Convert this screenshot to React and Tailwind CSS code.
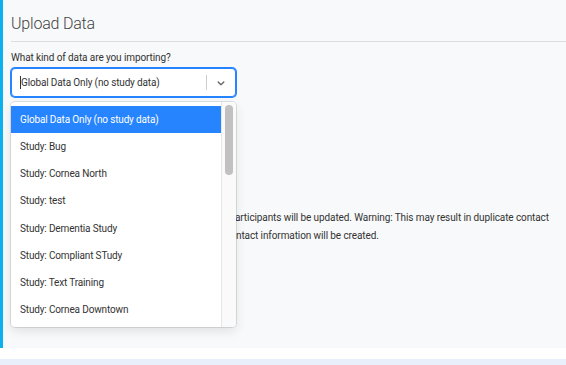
import React from "react";

const options = [
  "Global Data Only (no study data)",
  "Study: Bug",
  "Study: Cornea North",
  "Study: test",
  "Study: Dementia Study",
  "Study: Compliant STudy",
  "Study: Text Training",
  "Study: Cornea Downtown",
];

export default function App() {
  return (
    <div className="w-[566px] h-[365px] bg-white font-['Roboto',sans-serif] overflow-hidden">
      <div className="relative h-[348px] bg-[#f8f9fa] border-l-[3px] border-[#0cb0ef] pl-[8px]">
        <h1 className="pt-[12px] h-[41px] text-[16px] leading-[24px] font-light tracking-[-0.2px] text-[#444]">Upload Data</h1>
        <div className="h-px bg-[#dcdde0]" />
        <div className="pt-[10px] text-[10px] leading-[12px] tracking-[-0.1px] text-[#333]">What kind of data are you importing?</div>
        <div className="mt-[4px] w-[225px] h-[29px] rounded-[4px] border border-[#2684ff] shadow-[0_0_0_1px_#2684ff] bg-white flex items-center">
          <div className="flex-1 pl-[8px] text-[10px] tracking-[-0.15px] text-[#333] flex items-center">
            <span className="w-px h-[13px] bg-[#333]" />
            <span>Global Data Only (no study data)</span>
          </div>
          <div className="w-px h-[15px] bg-[#cccccc]" />
          <div className="w-[28px] flex justify-center text-[#666]">
            <svg width="12" height="12" viewBox="0 0 20 20" fill="currentColor">
              <path d="M4.516 7.548c0.436-0.446 1.043-0.481 1.576 0l3.908 3.747 3.908-3.747c0.533-0.481 1.141-0.446 1.574 0 0.436 0.445 0.408 1.197 0 1.615-0.406 0.418-4.695 4.502-4.695 4.502-0.217 0.223-0.502 0.335-0.787 0.335s-0.57-0.112-0.789-0.335c0 0-4.287-4.084-4.695-4.502s-0.436-1.17 0-1.615z" />
            </svg>
          </div>
        </div>

        <div className="mt-[112px] text-[10px] leading-[18px] tracking-[-0.1px] text-[#333] whitespace-nowrap">
          <div className="flex">
            <span className="w-[224px] overflow-hidden flex justify-end">If checked, existing p</span>
            <span>articipants will be updated. Warning: This may result in duplicate contact</span>
          </div>
          <div className="flex">
            <span className="w-[225px] overflow-hidden flex justify-end">information. If unchecked, new co</span>
            <span>ntact information will be created.</span>
          </div>
        </div>

        <div className="absolute left-[8px] top-[102px] w-[225px] h-[225px] bg-white rounded-[4px] shadow-[0_0_0_1px_rgba(0,0,0,0.1),0_4px_11px_rgba(0,0,0,0.1)] flex overflow-hidden">
          <div className="flex-1 pt-[4px]">
            {options.map((o, i) => (
              <div
                key={o}
                className={
                  "h-[27.15px] pl-[9px] flex items-center text-[10px] tracking-[-0.15px] " +
                  (i === 0 ? "bg-[#2684ff] text-white" : "text-[#333]")
                }
              >
                {o}
              </div>
            ))}
          </div>
          <div className="w-[15px] bg-[#fafafa] border-l border-[#e6e6e6] pt-[3px] flex justify-center">
            <div className="w-[8px] h-[70px] rounded-full bg-[#c1c1c1]" />
          </div>
        </div>
      </div>
      <div className="mt-[11px] h-[6px] bg-[#eaf0fb]" />
    </div>
  );
}
